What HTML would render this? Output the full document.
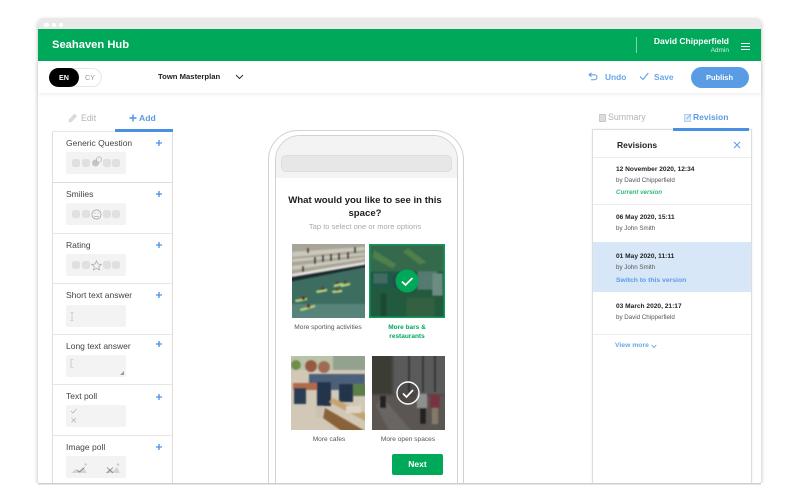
<!DOCTYPE html>
<html><head><meta charset="utf-8"><title>Seahaven Hub</title>
<style>
html,body{margin:0;padding:0;background:#fff}
body{width:801px;height:501px;position:relative;overflow:hidden;font-family:"Liberation Sans",sans-serif;color:#333}
div,span,svg{position:absolute;box-sizing:border-box}
.t{white-space:nowrap;line-height:12px}
.c{text-align:center}
.title{font-size:8.5px;color:#444;left:66px}
.plus{left:155px;width:8px;height:8px}
.box{left:66px;width:60px;height:22px;background:#f3f3f3;border-radius:2px}
.dot{width:7.5px;height:7.5px;border-radius:2.5px;background:#e0e0e0;top:7px}
.hr{left:53px;width:119px;height:1px;background:#e6e6e6}
.rd{left:616px;font-size:6.6px;font-weight:bold;color:#222}
.rb{left:616px;font-size:6.2px;color:#555}
.rl{left:593px;width:158px;height:1px;background:#ececec}
.lab{font-size:6.6px;color:#555}
</style></head><body>
<!-- window -->
<div style="left:38px;top:18px;width:723px;height:465px;background:#fff;border-radius:5px 5px 2px 2px;box-shadow:0 2px 5px rgba(0,0,0,.28)"></div>
<div style="left:38px;top:18px;width:723px;height:12px;background:#e9e9e9;border-radius:5px 5px 0 0"></div>
<div style="left:44px;top:22.5px;width:4.5px;height:4.5px;border-radius:50%;background:#fff"></div>
<div style="left:51.5px;top:22.5px;width:4.5px;height:4.5px;border-radius:50%;background:#fff"></div>
<div style="left:58.5px;top:22.5px;width:4.5px;height:4.5px;border-radius:50%;background:#fff"></div>
<!-- header -->
<div style="left:38px;top:29px;width:723px;height:32px;background:#00a859"></div>
<div class="t" style="left:52px;top:38.5px;font-size:11.2px;font-weight:bold;color:#fff">Seahaven Hub</div>
<div style="left:636px;top:37px;width:1px;height:16px;background:#7fd3ac"></div>
<div class="t" style="right:72px;top:35px;font-size:8.5px;font-weight:bold;color:#fff">David Chipperfield</div>
<div class="t" style="right:72px;top:45px;font-size:6.5px;color:#d5f0e2">Admin</div>
<div style="left:741px;top:42.5px;width:9px;height:1.3px;background:#fff"></div>
<div style="left:741px;top:45.5px;width:9px;height:1.3px;background:#fff"></div>
<div style="left:741px;top:48.5px;width:9px;height:1.3px;background:#fff"></div>
<!-- toolbar -->
<div style="left:38px;top:61px;width:723px;height:32px;background:#fff;box-shadow:0 2px 4px rgba(0,0,0,.06)"></div>
<div style="left:49px;top:68px;width:53px;height:19px;border-radius:10px;border:1px solid #e6e6e6;background:#fff"></div>
<div class="t c" style="left:49px;top:68px;width:30px;height:19px;border-radius:10px;background:#000;color:#fff;font-size:7.2px;font-weight:bold;line-height:19px">EN</div>
<div class="t" style="left:85px;top:71.5px;font-size:7.2px;color:#999">CY</div>
<div class="t" style="left:158px;top:71px;font-size:7.7px;font-weight:bold;color:#222">Town Masterplan</div>
<svg style="left:235px;top:74px" width="9" height="6" viewBox="0 0 9 6"><path d="M1 1l3.500 3.500L8 1" fill="none" stroke="#333" stroke-width="1"/></svg>
<svg style="left:588px;top:72px" width="10" height="9" viewBox="0 0 10 9"><path d="M3.500 .8L1 2.800l2.500 2M1 2.800h5.500a2.300 2.300 0 0 1 0 5H3" fill="none" stroke="#5b9be6" stroke-width="1"/></svg>
<div class="t" style="left:605px;top:71px;font-size:8.400px;font-weight:bold;color:#6aa5ea">Undo</div>
<svg style="left:639px;top:72px" width="10" height="9" viewBox="0 0 10 9"><path d="M1 4.500l3 3L9.300 1" fill="none" stroke="#5b9be6" stroke-width="1"/></svg>
<div class="t" style="left:654px;top:71px;font-size:8.400px;font-weight:bold;color:#6aa5ea">Save</div>
<div class="t c" style="left:690.5px;top:67px;width:58px;height:21px;border-radius:11px;background:#5a9be6;color:#fff;font-size:7.500px;font-weight:bold;line-height:21px">Publish</div>
<!-- left tabs -->
<svg style="left:68px;top:113px" width="9" height="10" viewBox="0 0 9 10"><path d="M1 9l.5-2.500L6.500 1.200l2 2L3.500 8.300z" fill="#ddd" stroke="#ccc" stroke-width=".6"/></svg>
<div class="t" style="left:81px;top:112px;font-size:8.800px;color:#b5b5b5">Edit</div>
<svg class="plus" style="left:129px;top:114px" width="8" height="8" viewBox="0 0 8 8"><path d="M4 .5v7M.5 4h7" stroke="#4a90e2" stroke-width="1.400"/></svg>
<div class="t" style="left:139px;top:112px;font-size:8.600px;font-weight:bold;color:#5a9be6">Add</div>
<div style="left:115px;top:129px;width:58px;height:2.500px;background:#4a90e2"></div>
<!-- left panel -->
<div style="left:52px;top:131px;width:121px;height:352px;background:#fff;border:1px solid #dedede;border-bottom:0;border-top-color:#e8e8e8"></div>
<div style="left:115px;top:129px;width:58px;height:2.500px;background:#4a90e2"></div>
<div class="hr" style="top:182px;background:#dcdcdc"></div><div class="hr" style="top:233px"></div><div class="hr" style="top:283px"></div><div class="hr" style="top:334px"></div><div class="hr" style="top:384px"></div><div class="hr" style="top:435px"></div>

<div class="t title" style="top:137px">Generic Question</div>
<div class="t title" style="top:188px">Smilies</div>
<div class="t title" style="top:239px">Rating</div>
<div class="t title" style="top:289px">Short text answer</div>
<div class="t title" style="top:340px">Long text answer</div>
<div class="t title" style="top:390px">Text poll</div>
<div class="t title" style="top:441px">Image poll</div>

<svg class="plus" style="top:139px" viewBox="0 0 8 8"><path d="M4 1v6M1 4h6" stroke="#4a90e2" stroke-width="1.300"/></svg>
<svg class="plus" style="top:190px" viewBox="0 0 8 8"><path d="M4 1v6M1 4h6" stroke="#4a90e2" stroke-width="1.300"/></svg>
<svg class="plus" style="top:241px" viewBox="0 0 8 8"><path d="M4 1v6M1 4h6" stroke="#4a90e2" stroke-width="1.300"/></svg>
<svg class="plus" style="top:291px" viewBox="0 0 8 8"><path d="M4 1v6M1 4h6" stroke="#4a90e2" stroke-width="1.300"/></svg>
<svg class="plus" style="top:340px" viewBox="0 0 8 8"><path d="M4 1v6M1 4h6" stroke="#4a90e2" stroke-width="1.300"/></svg>
<svg class="plus" style="top:393px" viewBox="0 0 8 8"><path d="M4 1v6M1 4h6" stroke="#4a90e2" stroke-width="1.300"/></svg>
<svg class="plus" style="top:443px" viewBox="0 0 8 8"><path d="M4 1v6M1 4h6" stroke="#4a90e2" stroke-width="1.300"/></svg>

<div class="box" style="top:152px"><span class="dot" style="left:6px"></span><span class="dot" style="left:16px"></span><span class="dot" style="left:37px"></span><span class="dot" style="left:46px"></span>
<svg style="left:25px;top:3px" width="12" height="13" viewBox="0 0 12 13"><circle cx="4.500" cy="8" r="3.500" fill="#c4c4c4"/><circle cx="8" cy="4.500" r="2.700" fill="#eee" stroke="#999" stroke-width=".5"/></svg></div>
<div class="box" style="top:203px"><span class="dot" style="left:6px"></span><span class="dot" style="left:16px"></span><span class="dot" style="left:37px"></span><span class="dot" style="left:46px"></span>
<svg style="left:25px;top:5.500px" width="11" height="11" viewBox="0 0 11 11"><circle cx="5.500" cy="5.500" r="4.600" fill="none" stroke="#999" stroke-width=".7"/><path d="M3 4h1.500M6.500 4H8M3.200 7c1.200 1 3.400 1 4.600 0" fill="none" stroke="#999" stroke-width=".6"/></svg></div>
<div class="box" style="top:254px"><span class="dot" style="left:6px"></span><span class="dot" style="left:16px"></span><span class="dot" style="left:37px"></span><span class="dot" style="left:46px"></span>
<svg style="left:25px;top:6px" width="11" height="11" viewBox="0 0 11 11"><path d="M5.500 .8l1.400 3.200 3.400.3-2.600 2.300.8 3.400-3-1.800-3 1.800.8-3.400L.7 4.300l3.400-.3z" fill="none" stroke="#999" stroke-width=".6"/></svg></div>
<div class="box" style="top:305px"><svg style="left:4px;top:7px" width="4" height="9" viewBox="0 0 4 9"><path d="M.5 .5h3M2 .5v8M.5 8.500h3" fill="none" stroke="#b5b5b5" stroke-width=".6"/></svg></div>
<div class="box" style="top:355px"><svg style="left:4px;top:4px" width="4" height="9" viewBox="0 0 4 9"><path d="M3.500 .5H1v8h2.500" fill="none" stroke="#b5b5b5" stroke-width=".6"/></svg>
<svg style="left:54px;top:16px" width="4" height="4" viewBox="0 0 4 4"><path d="M0 4L4 0v4z" fill="#999"/></svg></div>
<div class="box" style="top:405px"><svg style="left:4px;top:2px" width="7" height="18" viewBox="0 0 7 18"><path d="M1 4l2 2 3.500-4M1.500 11l4.500 4.500M6 11l-4.500 4.500" fill="none" stroke="#aaa" stroke-width=".6"/></svg></div>
<div class="box" style="top:456px"><svg style="left:5px;top:6px" width="50" height="12" viewBox="0 0 50 12"><path d="M0 11l5-4 3 2 4-4 4 6z" fill="#d4d4d4"/><path d="M6 8l2.500 2 5-4.500" fill="none" stroke="#777" stroke-width=".7"/><circle cx="14.500" cy="2.500" r="1.300" fill="#d0d0d0"/><path d="M34 11l5-4 3 2 4-4 3 6z" fill="#d4d4d4"/><path d="M36 5.500l6 5.500M42 5.500l-6 5.500" fill="none" stroke="#777" stroke-width=".7"/><circle cx="47" cy="2.500" r="1.300" fill="#d0d0d0"/></svg></div>

<!-- phone -->
<div style="left:268px;top:130px;width:196px;height:360px;border:1px solid #d2d2d2;border-radius:30px 30px 0 0;background:#fff"></div>
<div style="left:275px;top:135px;width:183px;height:355px;border:1px solid #d2d2d2;border-radius:25px 25px 0 0;background:#fff"></div>
<div style="left:276px;top:136px;width:181px;height:42px;background:#f3f3f3;border-radius:24px 24px 0 0"></div>
<div style="left:281px;top:155px;width:171px;height:17px;background:#e7e7e7;border:1px solid #dedede;border-radius:5px"></div>
<div class="t c" style="left:276px;top:193.500px;width:178px;font-size:9.600px;font-weight:bold;color:#1d1d1d;line-height:13.500px">What would you like to see in this<br>space?</div>
<div class="t c" style="left:276px;top:221px;width:178px;font-size:7.600px;color:#aaa">Tap to select one or more options</div>

<svg style="left:292px;top:244px" width="73" height="74" viewBox="0 0 73 74"><defs><filter id="b" x="-5%" y="-5%" width="110%" height="110%"><feGaussianBlur stdDeviation=".7"/></filter></defs>
<rect width="73" height="74" fill="#466f64"/><g filter="url(#b)"><path d="M-2-2h77v22L-2 34z" fill="#a8a498"/><path d="M0 8l73-5v3L0 13zM0 15l73-6v2L0 18zM0 22l73-9v2L0 26z" fill="#cbc8bc"/><path d="M0 30L73 18v3L0 34z" fill="#e6e5df"/><path d="M-2 33l77-13v3L-2 38z" fill="#1e2b2f"/><path d="M-2 38l77-15v53H-2z" fill="#3e6c61"/><path d="M-2 60h77v16H-2z" fill="#56847a"/><path d="M3 56l12-2v2L4 58zM24 47l11-2v2l-10 2zM8 65l15-4v2l-14 4zM42 41l9-2v2l-9 2zM40 47l10-1v2l-9 1zM49 41l9-2v2l-9 2z" fill="#b5d77a"/><path d="M10 52h3v4h-3zM29 43h3v3h-3zM15 60h3v4h-3zM44 37h2v3h-2zM52 36h2v3h-2zM44 44h2v3h-2z" fill="#6b2b2b"/><path d="M22 13h2v7h-2zM30 11h2v7h-2zM38 10h2v7h-2zM46 9h2v7h-2zM55 8h2v7h-2zM10 22h2v6h-2zM62 3h2v6h-2zM15 4h2v5h-2z" fill="#333"/></g></svg>

<svg style="left:369px;top:244px" width="76" height="74" viewBox="0 0 76 74"><rect width="76" height="74" fill="#0f9a5a"/><rect x="1.500" y="1.500" width="73" height="71" fill="#1f5a46"/><svg x="1.500" y="1.500" width="73" height="71" viewBox="0 0 73 71"><g filter="url(#b)"><path d="M-2-2h77v28H-2z" fill="#34694b"/><path d="M4 5l22 14-4 4L2 12zM38 3l18 14-7 2L32 6z" fill="#4f7f4c"/><path d="M3 28h14v10H3z" fill="#3f6a62"/><path d="M47 26h20v20H47z" fill="#557a70"/><path d="M22 30h22v12H22z" fill="#2a4c4a"/><path d="M-2 44h77v29H-2z" fill="#235a3c"/><path d="M10 48h6v24h-6z" fill="#1b4a32"/><path d="M36 52h28v20H36z" fill="#33613f"/><path d="M62 28h10v22H62z" fill="#6c8c82"/></g></svg>
<circle cx="38" cy="37" r="11.500" fill="#00a859"/><path d="M33 37.500l3.500 3.500 7-7" fill="none" stroke="#fff" stroke-width="1.800"/></svg>

<svg style="left:291px;top:356px" width="74" height="74" viewBox="0 0 74 74"><rect width="74" height="74" fill="#d2c8b6"/><g filter="url(#b)"><path d="M-2-2h78v16H-2z" fill="#b9c3a8"/><circle cx="5" cy="9" r="5" fill="#6e8f46"/><circle cx="20" cy="10" r="6" fill="#96583f"/><circle cx="33" cy="11" r="6" fill="#a06a58"/><path d="M42-2h34v16H42z" fill="#93a28d"/><path d="M18 18h56v16H18z" fill="#4d6079"/><path d="M2 27h30v7H2z" fill="#b26a4d"/><path d="M26 26h14v24H26zM48 28h14v18H48z" fill="#22344c"/><path d="M25 50h7v12h-7z" fill="#c9c2b2"/><path d="M3 32h12v16H3z" fill="#2a3d52"/><path d="M34 52l42 24H52L32 62z" fill="#8a6239"/><path d="M38 46l38 20v-8L42 42z" fill="#c4a474"/><path d="M55 50h15v7H55z" fill="#ddd6c6"/><path d="M62 28h14v12H62z" fill="#5c7f4a"/></g></svg>

<svg style="left:372px;top:356px" width="73" height="74" viewBox="0 0 73 74"><rect width="73" height="74" fill="#504c49"/><g filter="url(#b)"><path d="M22-2h53v40H22z" fill="#5a5a5a"/><path d="M-2-2h22v40H-2z" fill="#3a3c34"/><path d="M36-2h2v38h-2zM50-2h2v38h-2zM62-2h2v38h-2z" fill="#353535"/><path d="M-2 40h77v36H-2z" fill="#5b5653"/><path d="M10 40l30 36H18L4 50z" fill="#696561"/><path d="M45 38h10v14H45z" fill="#8f8f8f"/><path d="M48 52h6v16h-6z" fill="#222"/><path d="M58 38h10v14H58z" fill="#753540"/><path d="M60 52h6v16h-6z" fill="#85796a"/><path d="M8 40h6v12H8z" fill="#242424"/></g>
<circle cx="36" cy="37" r="11" fill="rgba(0,0,0,.15)" stroke="#fff" stroke-width="1.400"/><path d="M31 37.500l3.500 3.500 6.500-7" fill="none" stroke="#fff" stroke-width="1.700"/></svg>

<div class="t c lab" style="left:284px;top:322px;width:88px">More sporting activities</div>
<div class="t c" style="left:364px;top:324px;width:86px;font-size:6.500px;font-weight:bold;color:#00a859;line-height:8.500px">More bars &amp;<br>restaurants</div>
<div class="t c lab" style="left:285px;top:434px;width:88px">More cafes</div>
<div class="t c lab" style="left:364px;top:434px;width:88px">More open spaces</div>
<div class="t c" style="left:392px;top:453.500px;width:51px;height:21px;background:#00a859;border-radius:2px;color:#fff;font-size:8.500px;font-weight:bold;line-height:21px">Next</div>

<!-- right tabs -->
<svg style="left:599px;top:112.500px" width="8" height="9" viewBox="0 0 8 9"><path d="M.5 1.500h6v7h-6z" fill="#ddd" stroke="#bbb" stroke-width=".7"/></svg>
<div class="t" style="left:608px;top:111px;font-size:8.800px;color:#b3b3b3">Summary</div>
<svg style="left:684px;top:112.500px" width="8" height="9" viewBox="0 0 8 9"><path d="M.5 1.500h6v7h-6z" fill="#e4eefb" stroke="#9cc2f0" stroke-width=".7"/><path d="M2.500 6L7 1.500" stroke="#6aa5ea" stroke-width=".8"/></svg>
<div class="t" style="left:693px;top:110.500px;font-size:8.500px;font-weight:bold;color:#5a9be6">Revision</div>
<!-- right panel -->
<div style="left:592px;top:129px;width:160px;height:354px;background:#fff;border:1px solid #dedede;border-bottom:0;box-shadow:0 0 2px rgba(0,0,0,.08)"></div>
<div style="left:673px;top:128px;width:76px;height:2.500px;background:#4a90e2"></div>
<div class="t" style="left:617px;top:139px;font-size:8.500px;font-weight:bold;color:#222">Revisions</div>
<svg style="left:733px;top:141px" width="8" height="8" viewBox="0 0 8 8"><path d="M1 1l6 6M7 1L1 7" stroke="#5a9be6" stroke-width="1"/></svg>
<div class="rl" style="top:157px"></div>
<div class="t rd" style="top:164px">12 November 2020, 12:34</div>
<div class="t rb" style="top:174.500px">by David Chipperfield</div>
<div class="t" style="left:616px;top:187px;font-size:6.200px;font-style:italic;font-weight:bold;color:#2fb878">Current version</div>
<div class="rl" style="top:204px"></div>
<div class="t rd" style="top:212px">06 May 2020, 15:11</div>
<div class="t rb" style="top:222.500px">by John Smith</div>
<div style="left:593px;top:242px;width:158px;height:50px;background:#d8e7f8"></div>
<div class="t rd" style="top:251px">01 May 2020, 11:11</div>
<div class="t rb" style="top:261.500px">by John Smith</div>
<div class="t" style="left:616px;top:275px;font-size:6.800px;font-weight:bold;color:#5a9be6">Switch to this version</div>
<div class="t rd" style="top:301px">03 March 2020, 21:17</div>
<div class="t rb" style="top:311.500px">by David Chipperfield</div>
<div class="rl" style="top:334px"></div>
<div class="t" style="left:615px;top:340px;font-size:6.800px;font-weight:bold;color:#6aa5ea">View more</div>
<svg style="left:651px;top:343.500px" width="6" height="5" viewBox="0 0 6 5"><path d="M.7 1l2.300 2.500L5.300 1" fill="none" stroke="#5a9be6" stroke-width=".9"/></svg>
<!-- cover below window -->
<div style="left:0;top:483px;width:801px;height:18px;background:#fff"></div>
<div style="left:38px;top:483px;width:723px;height:2px;background:linear-gradient(#c4c4c4,#eeeeee)"></div>
</body></html>
